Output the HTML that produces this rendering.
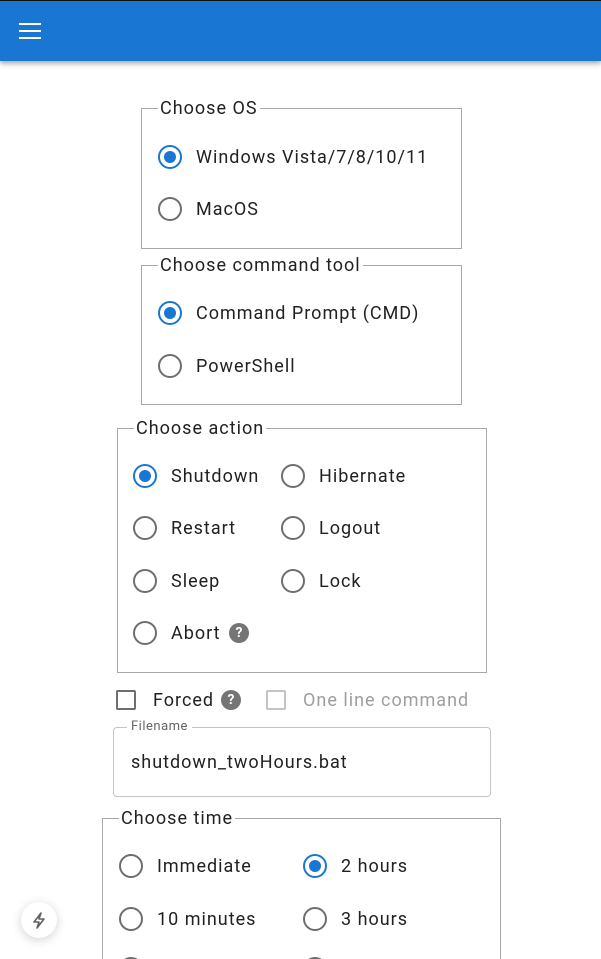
<!DOCTYPE html>
<html><head><meta charset="utf-8"><style>
*{margin:0;padding:0;box-sizing:border-box}
html,body{width:601px;height:959px;overflow:hidden}
body{background:#fff;position:relative;font-family:"Roboto","Liberation Sans",sans-serif;color:#212121;letter-spacing:1px}
.hdr{position:absolute;left:0;top:0;width:601px;height:61px;background:#1976d2;border-top:1px solid #111;box-shadow:0 2px 4px rgba(0,0,0,.25),0 4px 6px rgba(0,0,0,.12)}
.bar{position:absolute;left:19px;width:22px;height:2px;background:#fff}
.fs{position:absolute;border:1px solid #a8a8a8}
.lg{position:absolute;top:-11px;background:#fff;padding:0 2px;font-size:18px;line-height:22px;color:#212121}
.r{position:absolute;width:24px;height:24px;border-radius:50%;border:2px solid #6e6e6e}
.r.on{border-color:#1976d2}
.r.on::after{content:"";position:absolute;left:4px;top:4px;width:12px;height:12px;border-radius:50%;background:#1976d2}
.t{position:absolute;font-size:18px;line-height:22px;color:#212121;white-space:nowrap;margin-top:1px}
.q{position:absolute;width:20px;height:20px;border-radius:50%;background:#757575;color:#fff;font-size:14px;font-weight:bold;text-align:center;line-height:20px;letter-spacing:0}
.cb{position:absolute;width:20px;height:20px;border:2px solid #6e6e6e;border-radius:2px}
</style></head><body>
<div class="hdr"><div class="bar" style="top:22px"></div><div class="bar" style="top:29px"></div><div class="bar" style="top:36px"></div></div>

<div class="fs" style="left:141px;top:108px;width:321px;height:141px"><div class="lg" style="left:16px">Choose OS</div></div>
<div class="r on" style="left:158px;top:145px"></div><div class="t" style="left:196px;top:146px">Windows Vista/7/8/10/11</div>
<div class="r" style="left:158px;top:197px"></div><div class="t" style="left:196px;top:198px">MacOS</div>

<div class="fs" style="left:141px;top:265px;width:321px;height:140px"><div class="lg" style="left:16px">Choose command tool</div></div>
<div class="r on" style="left:158px;top:301px"></div><div class="t" style="left:196px;top:302px">Command Prompt (CMD)</div>
<div class="r" style="left:158px;top:354px"></div><div class="t" style="left:196px;top:355px">PowerShell</div>

<div class="fs" style="left:117px;top:428px;width:370px;height:245px"><div class="lg" style="left:16px">Choose action</div></div>
<div class="r on" style="left:133px;top:464px"></div><div class="t" style="left:171px;top:465px">Shutdown</div>
<div class="r" style="left:281px;top:464px"></div><div class="t" style="left:319px;top:465px">Hibernate</div>
<div class="r" style="left:133px;top:516px"></div><div class="t" style="left:171px;top:517px">Restart</div>
<div class="r" style="left:281px;top:516px"></div><div class="t" style="left:319px;top:517px">Logout</div>
<div class="r" style="left:133px;top:569px"></div><div class="t" style="left:171px;top:570px">Sleep</div>
<div class="r" style="left:281px;top:569px"></div><div class="t" style="left:319px;top:570px">Lock</div>
<div class="r" style="left:133px;top:621px"></div><div class="t" style="left:171px;top:622px">Abort</div>
<div class="q" style="left:229px;top:623px">?</div>

<div class="cb" style="left:116px;top:690px"></div><div class="t" style="left:153px;top:689px">Forced</div>
<div class="q" style="left:221px;top:690px">?</div>
<div class="cb" style="left:266px;top:690px;border-color:#c4c4c4"></div><div class="t" style="left:303px;top:689px;color:#9e9e9e">One line command</div>

<div style="position:absolute;left:113px;top:727px;width:378px;height:70px;border:1px solid #c4c4c4;border-radius:4px"></div>
<div style="position:absolute;left:127px;top:719px;background:#fff;padding:0 4px;font-size:13px;line-height:16px;color:#666;letter-spacing:.5px">Filename</div>
<div class="t" style="left:131px;top:751px">shutdown_twoHours.bat</div>

<div class="fs" style="left:102px;top:818px;width:399px;height:160px"><div class="lg" style="left:16px">Choose time</div></div>
<div class="r" style="left:119px;top:854px"></div><div class="t" style="left:157px;top:855px">Immediate</div>
<div class="r on" style="left:303px;top:854px"></div><div class="t" style="left:341px;top:855px">2 hours</div>
<div class="r" style="left:119px;top:907px"></div><div class="t" style="left:157px;top:908px">10 minutes</div>
<div class="r" style="left:303px;top:907px"></div><div class="t" style="left:341px;top:908px">3 hours</div>
<div class="r" style="left:119px;top:957px"></div><div class="r" style="left:303px;top:957px"></div>

<div style="position:absolute;left:21px;top:902px;width:36px;height:36px;border-radius:50%;background:#fff;box-shadow:0 2px 10px rgba(0,0,0,.18)">
<svg width="36" height="36" viewBox="0 0 36 36"><path d="M20 11 L13 20 H18 L16 26 L23 17 H18 Z" fill="none" stroke="#616161" stroke-width="1.6" stroke-linejoin="round"/></svg></div>
</body></html>
